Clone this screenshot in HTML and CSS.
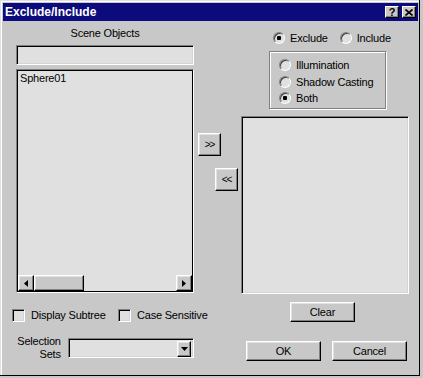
FILE: index.html
```html
<!DOCTYPE html>
<html lang="en">
<head>
    <meta charset="UTF-8">
    <title>Exclude/Include</title>
    <link rel="stylesheet" href="styles.css">
</head>
<body>
    <div class="window">
        <!-- caption bar -->
        <div class="titlebar">
            <span class="title">Exclude/Include</span>
            <div class="title-btns">
                <span class="tbtn">?</span>
                <span class="tbtn">
                    <svg width="8" height="7" viewBox="0 0 8 7"><path d="M0.5 0.5 L7.5 6.5 M7.5 0.5 L0.5 6.5" stroke="#000" stroke-width="1.6"/></svg>
                </span>
            </div>
        </div>

        <div class="content">
            <!-- scene objects side -->
            <div class="col-left">
                <div class="caption">Scene Objects</div>
                <div class="edit sunken"></div>
                <div class="listbox sunken scene-list">
                    <div class="items">
                        <div class="item">Sphere01</div>
                    </div>
                    <div class="hscroll">
                        <span class="sbtn raised">
                            <svg width="4" height="7" viewBox="0 0 4 7"><path d="M4 0 L0 3.5 L4 7 Z" fill="#000"/></svg>
                        </span>
                        <span class="thumb raised"></span>
                        <span class="track"></span>
                        <span class="sbtn raised">
                            <svg width="4" height="7" viewBox="0 0 4 7"><path d="M0 0 L4 3.5 L0 7 Z" fill="#000"/></svg>
                        </span>
                    </div>
                </div>
                <div class="checks">
                    <label class="check first"><span class="box sunken"></span>Display Subtree</label>
                    <label class="check"><span class="box sunken"></span>Case Sensitive</label>
                </div>
                <div class="selsets">
                    <div class="selsets-label">Selection<br>Sets</div>
                    <div class="combo sunken">
                        <span class="combo-btn raised">
                            <svg width="7" height="4" viewBox="0 0 7 4"><path d="M0 0 L7 0 L3.5 4 Z" fill="#000"/></svg>
                        </span>
                    </div>
                </div>
            </div>

            <!-- move buttons -->
            <div class="col-mid">
                <button class="btn raised arrow add">&gt;&gt;</button>
                <button class="btn raised arrow remove">&lt;&lt;</button>
            </div>

            <!-- exclude/include side -->
            <div class="col-right">
                <div class="mode-row">
                    <span class="radio checked"></span><span class="radio-text">Exclude</span>
                    <span class="radio"></span><span class="radio-text">Include</span>
                </div>
                <div class="groupbox">
                    <div class="opt"><span class="radio"></span><span class="radio-text">Illumination</span></div>
                    <div class="opt"><span class="radio"></span><span class="radio-text">Shadow Casting</span></div>
                    <div class="opt"><span class="radio checked"></span><span class="radio-text">Both</span></div>
                </div>
                <div class="listbox sunken target-list"></div>
                <button class="btn raised clear">Clear</button>
                <div class="dlg-btns">
                    <button class="btn raised">OK</button>
                    <button class="btn raised">Cancel</button>
                </div>
            </div>
        </div>
    </div>
</body>
</html>
```

FILE: styles.css
```css
body {
    margin: 0;
    padding: 0;
    background: #c8c8c8;
    font-family: "Liberation Sans", Arial, sans-serif;
    font-size: 11px;
    letter-spacing: -0.2px;
    white-space: nowrap;
    color: #000;
}
.window {
    width: 423px;
    height: 378px;
    box-sizing: border-box;
    padding: 3px 5px 4px 3px;
    background: #c8c8c8;
    box-shadow: inset -3px -2px #c8c8c8, inset -4px -3px #000, inset 1px 1px #e0e0e0, inset 2px 2px #fff;
}
.titlebar {
    height: 18px;
    background: #0b0b7d;
    display: flex;
    align-items: center;
    justify-content: space-between;
    padding-left: 2px;
    padding-right: 2px;
}
.title {
    color: #fff;
    font-weight: bold;
    font-size: 12px;
    letter-spacing: 0;
}
.title-btns {
    display: flex;
    gap: 3px;
}
.tbtn {
    width: 14px;
    height: 12px;
    box-sizing: border-box;
    background: #c8c8c8;
    border: 1px solid;
    border-color: #fff #000 #000 #fff;
    box-shadow: inset -1px -1px #808080;
    display: flex;
    align-items: center;
    justify-content: center;
    font-weight: bold;
    font-size: 11px;
    line-height: 10px;
}
.raised {
    box-sizing: border-box;
    background: #c8c8c8;
    border: 1px solid;
    border-color: #fff #000 #000 #fff;
    box-shadow: inset -1px -1px #808080, inset 1px 1px #e2e2e2;
}
.sunken {
    box-sizing: border-box;
    border: 1px solid;
    border-color: #808080 #fff #fff #808080;
    box-shadow: inset 1px 1px #000, inset -1px -1px #d4d4d4;
    background: #e0e0e0;
}
.content {
    display: flex;
}
.col-left {
    width: 178px;
    margin-left: 13px;
    padding-top: 6px;
}
.caption {
    height: 13px;
    line-height: 13px;
    text-align: center;
}
.edit {
    height: 20px;
    margin-top: 5px;
}
.listbox {
    display: flex;
    flex-direction: column;
}
.scene-list {
    height: 224px;
    margin-top: 4px;
    padding: 1px;
    box-shadow: inset 1px 1px #000, inset -1px -1px #000;
}
.items {
    flex: 1;
}
.item {
    line-height: 13px;
    padding: 1px 2px 0 2px;
}
.hscroll {
    display: flex;
    height: 16px;
    background: #e0e0e0;
}
.sbtn {
    width: 16px;
    height: 16px;
    display: flex;
    align-items: center;
    justify-content: center;
}
.thumb {
    width: 50px;
    height: 16px;
}
.track {
    flex: 1;
}
.checks {
    display: flex;
    margin-left: -4px;
    margin-top: 16px;
    height: 13px;
}
.check {
    display: flex;
    align-items: center;
    gap: 6px;
    line-height: 13px;
    flex-shrink: 0;
}
.check.first {
    width: 106px;
}
.box {
    width: 13px;
    height: 13px;
    flex-shrink: 0;
}
.selsets {
    display: flex;
    margin-top: 13px;
}
.selsets-label {
    width: 45px;
    text-align: right;
    line-height: 13px;
}
.combo {
    width: 127px;
    height: 20px;
    margin-left: 7px;
    margin-top: 3px;
    display: flex;
    justify-content: flex-end;
    padding: 2px;
}
.combo-btn {
    width: 14px;
    height: 16px;
    display: flex;
    align-items: center;
    justify-content: center;
}
.col-mid {
    width: 46px;
    display: flex;
    flex-direction: column;
}
.btn {
    font-family: "Liberation Sans", Arial, sans-serif;
    font-size: 11px;
    letter-spacing: -0.2px;
    color: #000;
    padding: 0;
    margin: 0;
}
.arrow {
    width: 23px;
    height: 23px;
    font-size: 10px;
    letter-spacing: -1px;
}
.add {
    margin-top: 112px;
    margin-left: 4px;
}
.remove {
    margin-top: 12px;
    margin-left: 21px;
}
.col-right {
    width: 169px;
    padding-top: 10px;
}
.mode-row {
    display: flex;
    align-items: center;
    height: 13px;
    padding-left: 33px;
}
.radio {
    width: 12px;
    height: 12px;
    box-sizing: border-box;
    border-radius: 50%;
    border: 1px solid;
    border-color: #808080 #fff #fff #808080;
    box-shadow: inset 1px 1px #404040;
    background: #e0e0e0;
    flex-shrink: 0;
}
.radio.checked {
    background: radial-gradient(circle, #000 0 2px, #e0e0e0 2.5px);
}
.radio-text {
    margin-left: 5px;
    margin-right: 12px;
}
.groupbox {
    width: 117px;
    height: 58px;
    box-sizing: border-box;
    margin-left: 29px;
    margin-top: 7px;
    border: 1px solid #808080;
    box-shadow: inset 1px 1px #fff, 1px 1px #fff;
    padding: 5px 0 0 9px;
}
.opt {
    display: flex;
    align-items: center;
    height: 16.5px;
}
.target-list {
    width: 168px;
    height: 178px;
    margin-top: 7px;
    margin-left: 1px;
}
.clear {
    display: block;
    width: 65px;
    height: 20px;
    margin-top: 8px;
    margin-left: 50px;
}
.dlg-btns {
    display: flex;
    gap: 11px;
    margin-top: 19px;
    margin-left: 6px;
}
.dlg-btns .btn {
    width: 75px;
    height: 20px;
}
```
